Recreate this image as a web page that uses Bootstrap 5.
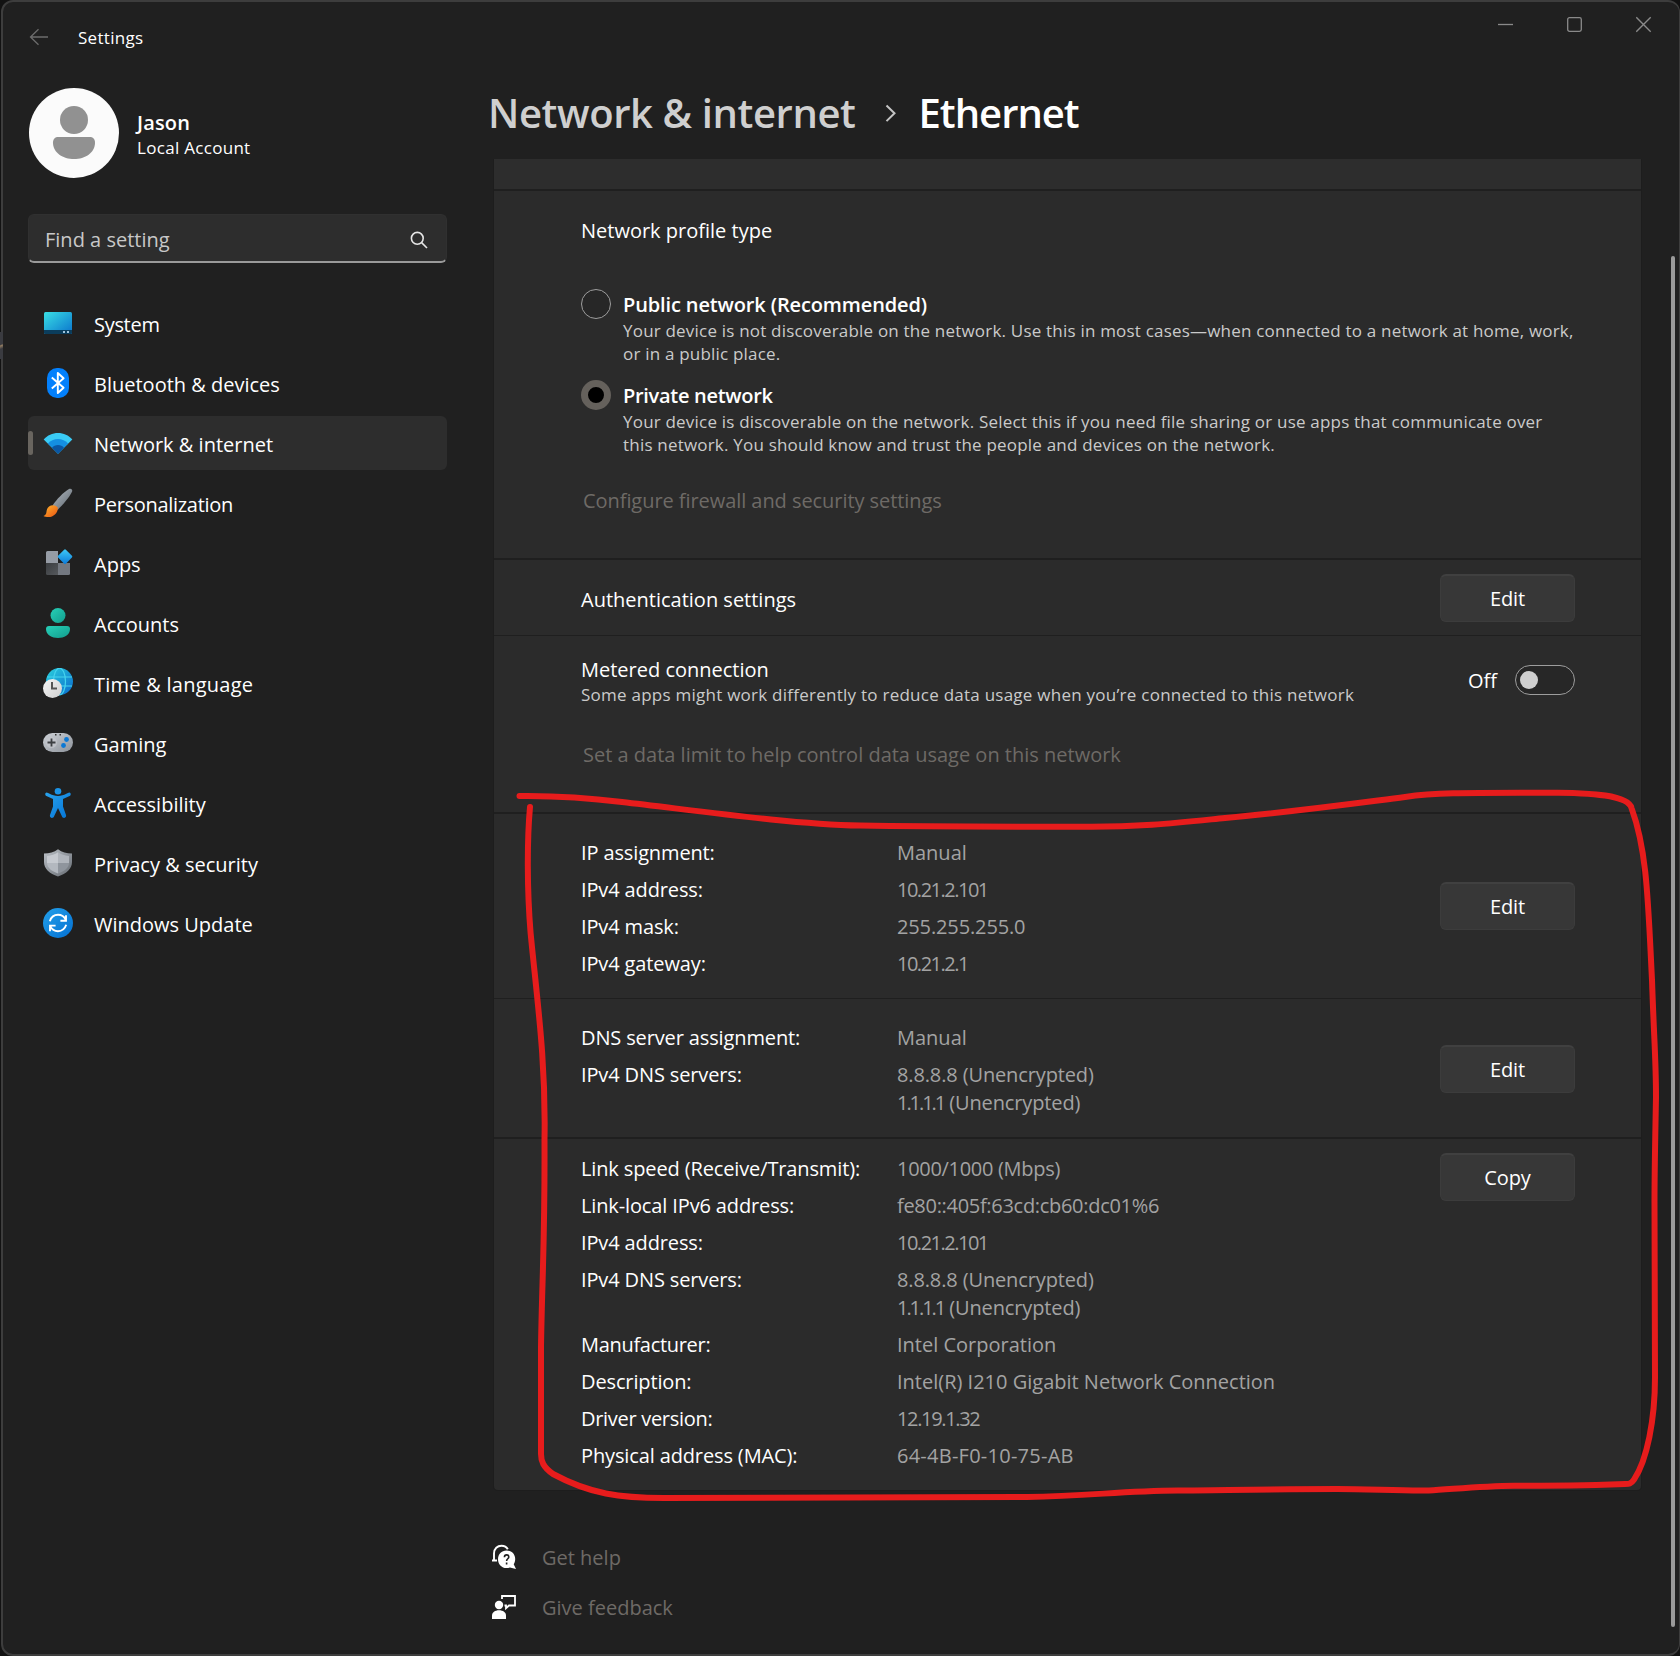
<!DOCTYPE html>
<html lang="en" data-bs-theme="dark">
<head>
<meta charset="utf-8">
<meta name="viewport" content="width=device-width, initial-scale=1">
<title>Settings</title>
<link href="https://cdn.jsdelivr.net/npm/bootstrap@5.3.0/dist/css/bootstrap.min.css" rel="stylesheet">
<style>
  body { background: #121212; font-family: "Open Sans", sans-serif; font-size: 20px; line-height: 28px; color: #fff; width: 1680px; height: 1656px; overflow: hidden; }
  .app-window { width: 1679px; height: 1656px; margin-left: 1px; border: 2px solid #3d3d3d; border-right-width: 1px; border-radius: 12px; background: #202020; }
  .desk-peek { left: 0; top: 332px; width: 3px; height: 27px; background: linear-gradient(160deg, #3a3b40 45%, #8f7a60 50%, #3a3b40 62%); }

  .titlebar { height: 66px; padding-left: 26px; }
  .titlebar-name { font-size: 17px; letter-spacing: .3px; line-height: 24px; padding-top: 24px; margin-left: 29px; }
  .back-arrow { margin-top: 26px; }
  .win-controls { gap: 53px; padding: 14px 27px 0 0; }

  .side { width: 419px; margin-left: 25px; padding-top: 20px; }
  .account-text { margin-left: 17px; padding-top: 2px; }
  .account-name { font-weight: 600; letter-spacing: .15px; line-height: 27px; }
  .account-kind { font-size: 17px; letter-spacing: .3px; line-height: 24px; }
  .search-box { height: 49px; margin-top: 36px; padding: 3px 18px 0 16px; border: 1px solid #303030; border-bottom: 2px solid #9a9a9a; border-radius: 6px; background: #2d2d2d; color: #c8c8c8; }
  .side-nav { margin-top: 33px; gap: 6px; }
  .side-nav .nav-link { height: 54px; padding: 0 0 0 15px; gap: 21px; color: #fff; border-radius: 6px; position: relative; }
  .side-nav .nav-link svg { margin-top: -1px; }
  .side-nav .nav-link span { padding-top: 4px; }
  .side-nav .nav-link.active { background: #2d2d2d; }
  .side-nav .nav-link.active::before { content: ""; position: absolute; left: 0; top: 15px; width: 5px; height: 24px; border-radius: 2.5px; background: #69655f; }

  .page { width: 1149px; margin-left: 45px; }
  .crumbs { height: 91px; font-size: 40px; font-weight: 600; line-height: 54px; padding-top: 18px; margin-left: -4px; }
  .crumb-parent { color: #cfcfcf; letter-spacing: -.4px; }
  .crumb-here { letter-spacing: -1px; }
  .crumb-sep { margin: 10px 22px 0 29px; }
  .panel-stack { background: #2b2b2b; border-radius: 0 0 4px 4px; margin-left: 2px; box-shadow: 0 0 0 1px #1d1d1d; clip-path: inset(0 -1px -1px -1px); }
  .panel-cut { height: 30px; background: #2d2d2d; }
  .sect { border-top: 1px solid #1f1f1f; padding: 0 66px 0 87px; }
  .sect-2 { border-top-width: 2px; }
  .sect-profile { height: 369px; padding-top: 26px; }
  .sect-auth { height: 77px; padding-top: 14px; }
  .sect-auth > div { padding-top: 12px; }
  .sect-metered { height: 177px; padding-top: 20px; }
  .sect-ip { height: 186px; padding-top: 25px; }
  .sect-ip .btn-flat { margin-top: 43px; }
  .sect-dns { height: 139px; padding-top: 25px; }
  .sect-dns .btn-flat { margin-top: 21px; }
  .sect-link { height: 353px; padding-top: 14px; }
  .sect-link .facts { padding-top: 2px; }
  .radio-row { margin-top: 17px; gap: 12px; }
  .radio-row-first { margin-top: 46px; }
  .hint { font-size: 17px; letter-spacing: .2px; line-height: 23px; color: #cacaca; white-space: nowrap; }
  .quiet-link { color: #6e6a66; text-decoration: none; padding-left: 2px; display: block; }
  .sect-profile .quiet-link { margin-top: 31px; letter-spacing: -.06px; }
  .sect-metered .hint { margin-top: -1px; }
  .sect-metered .quiet-link { margin-top: 35px; }
  .radio-ring { width: 30px; height: 30px; border-radius: 50%; border: 1.5px solid #9d9d9d; background: #272727; flex: none; margin-top: -2px; }
  .radio-ring.on { border: 7px solid #65615c; background: #000; }
  .option-title { font-weight: 600; line-height: 28px; }
  .btn-flat { width: 135px; height: 48px; padding: 0; border: 1px solid #3c3c3c; border-top: 2px solid #404040; border-radius: 6px; background: #373737; color: #fff; font-size: 20px; line-height: 28px; letter-spacing: -.1px; }
  .toggle-wrap { gap: 18px; height: 48px; }
  .toggle-wrap span { padding-top: 2px; }
  .toggle { width: 60px; height: 30px; border: 1.5px solid #9d9d9d; border-radius: 15px; background: #272727; padding-left: 4px; }
  .toggle i { width: 18px; height: 18px; border-radius: 50%; background: #cfcfcf; display: block; }
  .facts { row-gap: 9px; display: grid; grid-template-columns: 316px 1fr; align-content: start; margin: 0; }
  .facts dt { font-weight: 400; letter-spacing: -.13px; }
  .facts dd { margin: 0; color: #a3a3a3; }
  .foot { gap: 22px; padding-top: 54px; }
  .foot > div { gap: 26px; }
  .foot a { color: #6e6a66; text-decoration: none; }
  .scroll-thumb { left: 1671px; top: 256px; width: 4px; height: 1371px; border-radius: 2px; background: #9a9a9a; }
  .ink { left: 0; top: 0; pointer-events: none; }

  .page .tight-1 { letter-spacing: -.13px; }
  .tight-2, .page .tight-2 { letter-spacing: -.3px; }
  .page .tight-4 { letter-spacing: -1.35px; }
  .page .tight-5 { letter-spacing: -1.5px; }
  .page .tight-6 { letter-spacing: -2.05px; }
  .loose-1, .page .loose-1 { letter-spacing: .25px; }
</style>
<script src="https://cdn.jsdelivr.net/npm/bootstrap@5.3.0/dist/js/bootstrap.bundle.min.js"></script>
</head>
<body class="position-relative">
<div class="app-window d-flex flex-column">
  <header class="titlebar d-flex align-items-start">
    <svg class="back-arrow" width="20" height="18" fill="none" stroke="#6c6c6c" stroke-width="1.3"><path d="M19 9H1.5M9.5 1.2 1.5 9l8 7.8"/></svg>
    <span class="titlebar-name">Settings</span>
    <div class="win-controls d-flex ms-auto">
      <svg width="16" height="17" stroke="#8a8a8a" stroke-width="1.3"><path d="M0 8.500h15"/></svg>
      <svg width="16" height="17" fill="none" stroke="#8a8a8a" stroke-width="1.3"><rect x=".7" y="1.700" width="13.600" height="13.600" rx="1.800"/></svg>
      <svg width="16" height="17" stroke="#8a8a8a" stroke-width="1.3"><path d="m.3 1.300 14.400 14.400M14.700 1.300.3 15.700"/></svg>
    </div>
  </header>
  <div class="d-flex">
    <aside class="side">
      <div class="d-flex align-items-center">
        <svg width="92" height="90" viewBox="-1 0 92 90"><circle cx="45" cy="45" r="45" fill="#fbfbfb"/><circle cx="45" cy="32" r="14" fill="#919191"/><path d="M29.500 49h31c3.500 0 5.500 2 5.500 5.500C66 65 56 71 45 71s-21-6-21-16.500c0-3.500 2-5.500 5.500-5.500z" fill="#919191"/></svg>
        <div class="account-text">
          <div class="account-name">Jason</div>
          <div class="account-kind">Local Account</div>
        </div>
      </div>
      <div class="search-box d-flex align-items-center justify-content-between">
        <span>Find a setting</span>
        <svg width="18" height="18" fill="none" stroke="#e6e6e6" stroke-width="1.6"><circle cx="7.300" cy="7.300" r="5.900"/><path d="m11.600 11.600 5.400 5.400"/></svg>
      </div>
      <nav class="side-nav nav flex-column">
        <a class="nav-link d-flex align-items-center" href="#">
          <svg width="30" height="30"><defs><linearGradient id="gSys" x1="0" y1="0" x2="1" y2="1"><stop stop-color="#39dfe5"/><stop offset="1" stop-color="#0a73cc"/></linearGradient></defs><rect x="1" y="4" width="28" height="22" rx="1.500" fill="url(#gSys)"/><path d="M1 22h28v2.500a1.500 1.500 0 0 1-1.500 1.500h-25A1.500 1.500 0 0 1 1 24.500z" fill="#0b3d5c"/><path d="M20 23h2v2h-2zM24 23h2v2h-2z" fill="#9fc3dc"/></svg>
          <span class="tight-2">System</span></a>
        <a class="nav-link d-flex align-items-center" href="#">
          <svg width="30" height="30"><rect x="4" width="22" height="30" rx="10" fill="#0380fc"/><path d="m8.800 9.500 11.800 10.200L14.800 25V5l5.800 5.300L8.800 20.500" fill="none" stroke="#fff" stroke-width="1.900" stroke-linejoin="round"/></svg>
          <span>Bluetooth &amp; devices</span></a>
        <a class="nav-link active d-flex align-items-center" href="#">
          <svg width="30" height="30"><path d="M15 25.700.700 11.400C4.400 7.300 9.400 5 15 5s10.600 2.300 14.300 6.400z" fill="#3acbf5"/><path d="M15 25.700 4.900 15.600C7.500 12.600 11 11 15 11s7.500 1.600 10.100 4.600z" fill="#148fe2"/><path d="m15 25.700-6-6c1.500-1.800 3.500-2.800 6-2.800s4.500 1 6 2.800z" fill="#0a56a3"/></svg>
          <span>Network &amp; internet</span></a>
        <a class="nav-link d-flex align-items-center" href="#">
          <svg width="30" height="30"><defs><linearGradient id="gBr" x1="0" y1="0" x2="1" y2="1"><stop stop-color="#b4bcc4"/><stop offset="1" stop-color="#5c646c"/></linearGradient><linearGradient id="gBt" x1="0" y1="0" x2="1" y2="1"><stop stop-color="#ffb62e"/><stop offset="1" stop-color="#ea5412"/></linearGradient></defs><path d="M9.500 17.500C14 11 20 4.500 26 1c2-1 4 .5 3 2.800C26 10 20 16.500 14.500 22z" fill="url(#gBr)"/><path d="M14.700 19.500c.6 5-4 9.500-9.200 9.500-2 0-4-.4-5-1 3-1.200 2.700-3 3.300-6C4.800 17 11.500 15.500 14.700 19.500z" fill="url(#gBt)"/></svg>
          <span class="tight-2">Personalization</span></a>
        <a class="nav-link d-flex align-items-center" href="#">
          <svg width="30" height="30"><defs><linearGradient id="gA" x1="0" y1="0" x2="1" y2="1"><stop stop-color="#3fcbf8"/><stop offset="1" stop-color="#0a78d8"/></linearGradient><linearGradient id="gA2" x1="0" y1="0" x2="1" y2="1"><stop stop-color="#3a3d40"/><stop offset="1" stop-color="#55585c"/></linearGradient></defs><path d="M3 4.500A1.500 1.500 0 0 1 4.500 3H15v12H3z" fill="#969ca5"/><path d="M3 15h12v12H4.500A1.500 1.500 0 0 1 3 25.500z" fill="url(#gA2)"/><path d="M15 15h12v10.500a1.500 1.500 0 0 1-1.500 1.500H15z" fill="#737880"/><rect x="16.500" y="3.200" width="11" height="11" rx="1.200" transform="rotate(45 22 8.700)" fill="url(#gA)"/></svg>
          <span>Apps</span></a>
        <a class="nav-link d-flex align-items-center" href="#">
          <svg width="30" height="30"><defs><linearGradient id="gAc" x1="0" y1="0" x2="1" y2="1"><stop stop-color="#27d0b8"/><stop offset="1" stop-color="#129c8c"/></linearGradient></defs><circle cx="15" cy="7.500" r="7.500" fill="url(#gAc)"/><path d="M6 18h18c2 0 3 1 3 3 0 6-6 9-12 9S3 27 3 21c0-2 1-3 3-3z" fill="url(#gAc)"/></svg>
          <span>Accounts</span></a>
        <a class="nav-link d-flex align-items-center" href="#">
          <svg width="30" height="30"><defs><linearGradient id="gT" x1="0" y1="0" x2="1" y2="1"><stop stop-color="#2ad2de"/><stop offset="1" stop-color="#0a68cc"/></linearGradient><linearGradient id="gCl" x1="0" y1="0" x2="1" y2="1"><stop stop-color="#f5f5f5"/><stop offset="1" stop-color="#cfcfcf"/></linearGradient></defs><circle cx="16.500" cy="13.500" r="13.500" fill="url(#gT)"/><path d="M4 9h25M4 18h25" stroke="#45d3ee" stroke-width="1.200"/><ellipse cx="16.500" cy="13.500" rx="6" ry="13.300" fill="none" stroke="#45d3ee" stroke-width="1.200"/><circle cx="9.500" cy="20.500" r="9.500" fill="url(#gCl)"/><path d="M9 14v6.500h5" fill="none" stroke="#555" stroke-width="2"/></svg>
          <span class="loose-1">Time &amp; language</span></a>
        <a class="nav-link d-flex align-items-center" href="#">
          <svg width="30" height="30"><defs><linearGradient id="gG" x1="0" y1="0" x2="1" y2="1"><stop stop-color="#cdd1d6"/><stop offset="1" stop-color="#8d939b"/></linearGradient></defs><rect y="5" width="30" height="19" rx="9.500" fill="url(#gG)"/><circle cx="8.500" cy="14.500" r="5.500" fill="#c4c8cd" opacity=".7"/><path d="M8.500 10.500v8M4.500 14.500h8" stroke="#3c3f42" stroke-width="1.800"/><circle cx="23.500" cy="11.500" r="2.400" fill="#0b78d4"/><circle cx="20.500" cy="17.500" r="2.400" fill="#0b78d4"/><path d="M12 6h1.500v1.500H12zM16.500 6H18v1.500h-1.500z" fill="#333"/></svg>
          <span>Gaming</span></a>
        <a class="nav-link d-flex align-items-center" href="#">
          <svg width="30" height="30"><defs><linearGradient id="gX" x1="0" y1="0" x2="1" y2="1"><stop stop-color="#2aa4ee"/><stop offset="1" stop-color="#0372d4"/></linearGradient></defs><circle cx="15" cy="3.300" r="3.300" fill="#1b93e6"/><path d="M4.300 4.700C6 5.300 8 6.500 10.500 7.300c3 .8 6 .8 9 0C22 6.500 24 5.300 25.700 4.700c2.200-.6 2.800 2.400.9 3.300L20 11v7.500l3 8.500c.8 3-3 4-4 1.500L15 20l-4 8.500C10 31 6.200 30 7 27l3-8.500V11L3.400 8c-1.900-.9-1.300-3.900.9-3.300z" fill="url(#gX)"/></svg>
          <span>Accessibility</span></a>
        <a class="nav-link d-flex align-items-center" href="#">
          <svg width="30" height="30"><defs><linearGradient id="gP" x1="0" y1="0" x2="1" y2="1"><stop stop-color="#bcc1c7"/><stop offset="1" stop-color="#666c73"/></linearGradient></defs><path d="M15 1.300c4 3 8.500 4.200 14 4.200V14c0 7-5.500 11.500-14 14.500C6.500 25.500 1 21 1 14V5.500c5.500 0 10-1.200 14-4.200z" fill="url(#gP)"/><path d="M15 4.300V15H4V8c4.200-.3 7.800-1.500 11-3.700z" fill="#c6cad0"/><path d="M15 4.300V15h11V8c-4.200-.3-7.800-1.500-11-3.700z" fill="#b0b5bc"/><path d="M15 15v10.500C8.500 23 4.200 20 4 15z" fill="#b3b8bf"/><path d="M15 15v10.500C21.500 23 25.800 20 26 15z" fill="#8f959d"/></svg>
          <span>Privacy &amp; security</span></a>
        <a class="nav-link d-flex align-items-center" href="#">
          <svg width="30" height="30"><defs><linearGradient id="gU" x1="0" y1="0" x2="1" y2="1"><stop stop-color="#23a0ea"/><stop offset="1" stop-color="#0470d2"/></linearGradient></defs><circle cx="15" cy="15" r="15" fill="url(#gU)"/><g fill="none" stroke="#fff" stroke-width="1.900"><path d="M6.800 13.200C8.200 9 11.300 6.800 15 6.800c3.600 0 6.300 2 7.800 5M23 7.300v5.400h-5.600"/><path d="M23.200 16.800C21.800 21 18.700 23.200 15 23.200c-3.600 0-6.300-2-7.800-5M7 23.200v-5.600h5.600"/></g></svg>
          <span>Windows Update</span></a>
      </nav>
    </aside>
    <main class="page">
      <h1 class="crumbs d-flex mb-0">
        <span class="crumb-parent">Network &amp; internet</span>
        <svg class="crumb-sep" width="12" height="34" fill="none" stroke="#c4c4c4" stroke-width="2"><path d="m1.500 9.500 8 7.800-8 7.800"/></svg>
        <span class="crumb-here">Ethernet</span>
      </h1>
      <div class="panel-stack">
        <div class="panel-cut"></div>
        <section class="sect sect-2 sect-profile">
          <div>Network profile type</div>
          <div class="radio-row radio-row-first d-flex">
            <div class="radio-ring"></div>
            <div>
              <div class="option-title tight-1">Public network (Recommended)</div>
              <div class="hint">Your device is not discoverable on the network. Use this in most cases—when connected to a network at home, work,<br>or in a public place.</div>
            </div>
          </div>
          <div class="radio-row d-flex">
            <div class="radio-ring on"></div>
            <div>
              <div class="option-title tight-2">Private network</div>
              <div class="hint">Your device is discoverable on the network. Select this if you need file sharing or use apps that communicate over<br>this network. You should know and trust the people and devices on the network.</div>
            </div>
          </div>
          <a class="quiet-link" href="#">Configure firewall and security settings</a>
        </section>
        <section class="sect sect-2 sect-auth d-flex justify-content-between">
          <div>Authentication settings</div>
          <button class="btn btn-flat" type="button">Edit</button>
        </section>
        <section class="sect sect-metered">
          <div class="d-flex justify-content-between">
            <div>
              <div>Metered connection</div>
              <div class="hint loose-1">Some apps might work differently to reduce data usage when you’re connected to this network</div>
            </div>
            <div class="toggle-wrap d-flex align-items-center"><span>Off</span><div class="toggle d-flex align-items-center"><i></i></div></div>
          </div>
          <a class="quiet-link" href="#">Set a data limit to help control data usage on this network</a>
        </section>
        <section class="sect sect-2 sect-ip d-flex align-items-start">
          <dl class="facts flex-fill">
            <dt>IP assignment:</dt><dd>Manual</dd>
            <dt>IPv4 address:</dt><dd class="tight-5">10.21.2.101</dd>
            <dt>IPv4 mask:</dt><dd class="tight-1">255.255.255.0</dd>
            <dt>IPv4 gateway:</dt><dd class="tight-5">10.21.2.1</dd>
          </dl>
          <button class="btn btn-flat" type="button">Edit</button>
        </section>
        <section class="sect sect-dns d-flex align-items-start">
          <dl class="facts flex-fill">
            <dt>DNS server assignment:</dt><dd>Manual</dd>
            <dt>IPv4 DNS servers:</dt><dd class="tight-1">8.8.8.8 (Unencrypted)<br><span class="tight-6">1.1.1.1</span> (Unencrypted)</dd>
          </dl>
          <button class="btn btn-flat" type="button">Edit</button>
        </section>
        <section class="sect sect-2 sect-link d-flex align-items-start">
          <dl class="facts flex-fill">
            <dt>Link speed (Receive/Transmit):</dt><dd class="tight-2">1000/1000 (Mbps)</dd>
            <dt>Link-local IPv6 address:</dt><dd class="tight-2">fe80::405f:63cd:cb60:dc01%6</dd>
            <dt>IPv4 address:</dt><dd class="tight-5">10.21.2.101</dd>
            <dt>IPv4 DNS servers:</dt><dd class="tight-1">8.8.8.8 (Unencrypted)<br><span class="tight-6">1.1.1.1</span> (Unencrypted)</dd>
            <dt class="tight-2">Manufacturer:</dt><dd>Intel Corporation</dd>
            <dt>Description:</dt><dd>Intel(R) I210 Gigabit Network Connection</dd>
            <dt class="tight-2">Driver version:</dt><dd class="tight-4">12.19.1.32</dd>
            <dt>Physical address (MAC):</dt><dd class="loose-1">64-4B-F0-10-75-AB</dd>
          </dl>
          <button class="btn btn-flat" type="button">Copy</button>
        </section>
      </div>
      <div class="foot d-flex flex-column">
        <div class="d-flex">
          <svg width="24" height="26" viewBox="0 0 24 26"><path d="M2 17.200V9.500C2 4.500 5.500 1.700 9.500 1.700c3 0 5.200 1.500 6.300 3.600M0 16.500h5" fill="none" stroke="#fff" stroke-width="1.900"/><path d="M14.500 6.500c5 0 8.700 3.800 8.700 8.500 0 2.200-.7 4-1.500 5.300L24 25l-6-1.500c-1.200.4-2.300.6-3.500.6C9.600 24.100 6 20 6 15.200c0-4.900 3.500-8.700 8.500-8.700z" fill="#fff"/><path d="M12.400 13.200c0-3.200 4.400-2.900 4.400-.3 0 1.900-2.200 1.800-2.200 4M14.600 18.500v2" fill="none" stroke="#202020" stroke-width="1.600"/></svg>
          <a href="#">Get help</a>
        </div>
        <div class="d-flex">
          <svg width="24" height="26" viewBox="0 0 24 26"><circle cx="7" cy="11" r="4.200" fill="#fff"/><path d="M0 25v-3.500C0 18.300 3 16.200 7 16.200s7 2.100 7 5.300V25z" fill="#fff"/><path d="M10 5V2h13v9.500h-6l-3 2.700v-2.700h-1.500" fill="none" stroke="#fff" stroke-width="1.800"/></svg>
          <a href="#">Give feedback</a>
        </div>
      </div>
    </main>
  </div>
</div>
<div class="desk-peek position-absolute"></div>
<div class="scroll-thumb position-absolute"></div>
<svg class="ink position-absolute" width="1680" height="1656" fill="none" stroke="#e71c1c" stroke-width="6" stroke-linecap="round" stroke-linejoin="round"><path d="M519.500 796C562 795.500 590 798 622 802C700 811 790 824 860 825.600C940 827 1040 826.500 1080 826.700C1140 827.500 1185 822 1225 818C1300 811 1350 804 1405 797C1440 792 1480 793 1558 792.700C1590 793 1628 795 1631.500 808C1647 850 1648 900 1652 980C1654 1040 1656 1060 1656 1097C1655 1150 1654.500 1170 1654.500 1202L1655 1377C1655 1420 1647 1460 1634 1479.600C1631 1484 1629 1484 1625 1484L1596 1485C1560 1486 1540 1485.500 1514 1485.700C1480 1486 1450 1489.500 1429 1490.500C1400 1491 1370 1489 1337 1489C1280 1489 1230 1490 1178 1490.500C1120 1491 1090 1496 1027 1497L664 1498C620 1498 590 1494 553 1474C543 1467 541 1461 541 1454L541 1347C542 1280 545 1240 544.500 1140C546 1060 537 1000 530.600 933C527 890 527 840 530 807"/></svg>
</body>
</html>
